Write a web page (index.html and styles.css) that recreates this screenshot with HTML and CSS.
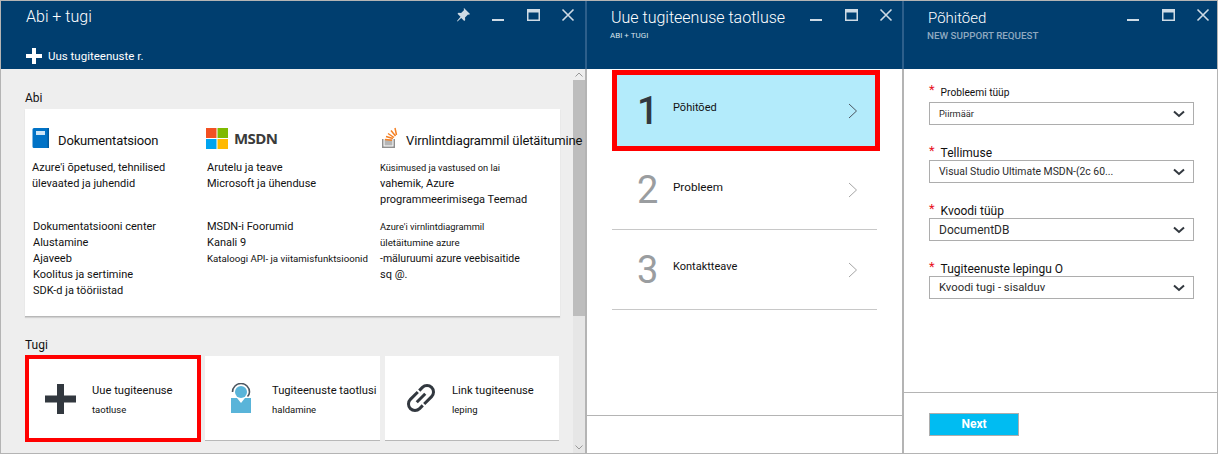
FILE: index.html
```html
<!DOCTYPE html>
<html lang="et">
<head>
    <meta charset="UTF-8">
    <meta name="viewport" content="width=device-width, initial-scale=1.0">
    <title>Abi + tugi</title>
    <link rel="stylesheet" href="styles.css">
</head>
<body>
    <div class="blades">
        <section class="blade blade-help">
            <header class="head">
                <div class="head-top">
                    <h1 class="title">Abi + tugi</h1>
                    <div class="win">
                        <svg width="16" height="16" viewBox="0 0 16 16"><path d="M9 1l6 6-1 .8-1-.4-3 3 .2 2.600-1 1-3-3L2.500 14.500 2 14l3.500-4.300-3-3 1-1 2.600.2 3-3-.4-1z" fill="#cfdbe5"/></svg>
                        <svg width="16" height="16" viewBox="0 0 16 16"><rect x="2" y="12" width="12" height="2" fill="#cfdbe5"/></svg>
                        <svg width="16" height="16" viewBox="0 0 16 16"><path d="M2 2h13v12H2zM3.500 5.500v7h10v-7z" fill="#cfdbe5" fill-rule="evenodd"/></svg>
                        <svg width="16" height="16" viewBox="0 0 16 16"><path d="M2.500 2.500l11 11M13.500 2.500l-11 11" stroke="#cfdbe5" stroke-width="1.600"/></svg>
                    </div>
                </div>
                <div class="command">
                    <svg width="16" height="16" viewBox="0 0 16 16"><path d="M6 0h4v6h6v4h-6v6H6v-6H0V6h6z" fill="#fff"/></svg>
                    <span>Uus tugiteenuste r.</span>
                </div>
            </header>
            <div class="help-body">
                <div class="help-main">
                    <div class="section-label label-abi">Abi</div>
                    <div class="card">
                        <div class="card-col col-docs">
                            <div class="card-head">
                                <svg width="18" height="22" viewBox="0 0 18 22"><path d="M2 1h15v20H2a1.500 1.500 0 0 1-1.500-1.500v-17A1.500 1.500 0 0 1 2 1z" fill="#0072c6"/><rect x="4" y="4" width="9" height="4" fill="#cfe6f7"/><rect x="15.500" y="1" width="1.500" height="20" fill="#005a9e"/></svg>
                                <span class="card-title">Dokumentatsioon</span>
                            </div>
                            <p class="desc">Azure'i õpetused, tehnilised<br>ülevaated ja juhendid</p>
                            <p class="links">Dokumentatsiooni center<br>Alustamine<br>Ajaveeb<br>Koolitus ja sertimine<br>SDK-d ja tööriistad</p>
                        </div>
                        <div class="card-col col-msdn">
                            <div class="card-head">
                                <svg width="22" height="21" viewBox="0 0 22 21"><rect width="10.500" height="10" fill="#f25022"/><rect x="11.500" width="10.500" height="10" fill="#7fba00"/><rect y="11" width="10.500" height="10" fill="#00a4ef"/><rect x="11.500" y="11" width="10.500" height="10" fill="#ffb900"/></svg>
                                <span class="msdn">MSDN</span>
                            </div>
                            <p class="desc">Arutelu ja teave<br>Microsoft ja ühenduse</p>
                            <p class="links">MSDN-i Foorumid<br>Kanali 9<br><span class="tight">Kataloogi API- ja viitamisfunktsioonid</span></p>
                        </div>
                        <div class="card-col col-stack">
                            <div class="card-head">
                                <svg width="18" height="22" viewBox="0 0 18 22"><path d="M2 12v9h13v-9h-1.500v7.500h-10V12z" fill="#8f8f8f"/><rect x="4.500" y="12.500" width="8" height="6" fill="#b5b5b5"/><path d="M5 12.500l7 .8M6 9.500l7 2M8 6.500l6 4M11 3.500l4.500 5.500M15 1l1.500 7" stroke="#f48024" stroke-width="1.500" fill="none"/></svg>
                                <span class="card-title">Virnlintdiagrammil ületäitumine</span>
                            </div>
                            <p class="desc"><span class="small">Küsimused ja vastused on lai</span><br>vahemik, Azure<br>programmeerimisega Teemad</p>
                            <p class="links"><span class="small">Azure'i virnlintdiagrammil</span><br><span class="tight">ületäitumine azure</span><br><span class="mid">-mäluruumi azure veebisaitide</span><br>sq @.</p>
                        </div>
                    </div>
                    <div class="section-label label-tugi">Tugi</div>
                    <div class="tiles">
                        <div class="tile tile-active">
                            <svg width="32" height="32" viewBox="0 0 32 32"><path d="M12 1h7v11.500h12v7H19V31h-7V19.500H0v-7h12z" fill="#32383f"/></svg>
                            <div class="tile-text"><span>Uue tugiteenuse</span><small>taotluse</small></div>
                        </div>
                        <div class="tile">
                            <svg width="20" height="30" viewBox="0 0 20 30"><path d="M1.500 9a8.500 8.500 0 0 1 17 0c0 2-1 3.500-2 4.500" fill="none" stroke="#4d5660" stroke-width="1.600"/><circle cx="10" cy="9" r="6" fill="#59b4d9"/><path d="M0 15h6l4 5 4-5h6v15H0z" fill="#59b4d9"/></svg>
                            <div class="tile-text"><span>Tugiteenuste taotlusi</span><small>haldamine</small></div>
                        </div>
                        <div class="tile">
                            <svg width="32" height="32" viewBox="0 0 32 32"><g transform="rotate(-45 16 16)" fill="none" stroke="#32383f" stroke-width="3"><path d="M18 9.500H7.500a6.500 6.500 0 0 0 0 13H12"/><path d="M14 22.500h10.500a6.500 6.500 0 0 0 0-13H20"/><path d="M10 16h12"/></g></svg>
                            <div class="tile-text"><span>Link tugiteenuse</span><small class="tiny">leping</small></div>
                        </div>
                    </div>
                </div>
                <div class="scrollbar">
                    <div class="scroll-up">
                        <svg width="8" height="5" viewBox="0 0 8 5"><path d="M.5 4.500L4 1l3.500 3.500" fill="none" stroke="#999"/></svg>
                    </div>
                    <div class="scroll-thumb"></div>
                    <div class="scroll-track"></div>
                    <svg class="scroll-down" width="8" height="5" viewBox="0 0 8 5"><path d="M.5.5L4 4 7.500.5" fill="none" stroke="#999"/></svg>
                </div>
            </div>
        </section>

        <section class="blade blade-steps">
            <header class="head">
                <div class="head-top">
                    <div class="title-block">
                        <h1 class="title">Uue tugiteenuse taotluse</h1>
                        <div class="subtitle sub-white">ABI + TUGI</div>
                    </div>
                    <div class="win">
                        <svg width="16" height="16" viewBox="0 0 16 16"><rect x="2" y="12" width="12" height="2" fill="#cfdbe5"/></svg>
                        <svg width="16" height="16" viewBox="0 0 16 16"><path d="M2 2h13v12H2zM3.500 5.500v7h10v-7z" fill="#cfdbe5" fill-rule="evenodd"/></svg>
                        <svg width="16" height="16" viewBox="0 0 16 16"><path d="M2.500 2.500l11 11M13.500 2.500l-11 11" stroke="#cfdbe5" stroke-width="1.600"/></svg>
                    </div>
                </div>
            </header>
            <div class="steps">
                <div class="step step-active">
                    <span class="step-num">1</span>
                    <span class="step-name">Põhitõed</span>
                    <svg width="10" height="16" viewBox="0 0 10 16"><path d="M1 1l7.500 7L1 15" fill="none" stroke="#4b5560" stroke-width="1"/></svg>
                </div>
                <div class="step step-line">
                    <span class="step-num">2</span>
                    <span class="step-name name-wide">Probleem</span>
                    <svg width="10" height="16" viewBox="0 0 10 16"><path d="M1 1l7.500 7L1 15" fill="none" stroke="#a6a6a6" stroke-width="1"/></svg>
                </div>
                <div class="step step-line">
                    <span class="step-num">3</span>
                    <span class="step-name">Kontaktteave</span>
                    <svg width="10" height="16" viewBox="0 0 10 16"><path d="M1 1l7.500 7L1 15" fill="none" stroke="#a6a6a6" stroke-width="1"/></svg>
                </div>
            </div>
            <div class="steps-foot"></div>
        </section>

        <section class="blade blade-form">
            <header class="head">
                <div class="head-top">
                    <div class="title-block">
                        <h1 class="title">Põhitõed</h1>
                        <div class="subtitle">NEW SUPPORT REQUEST</div>
                    </div>
                    <div class="win">
                        <svg width="16" height="16" viewBox="0 0 16 16"><rect x="2" y="12" width="12" height="2" fill="#cfdbe5"/></svg>
                        <svg width="16" height="16" viewBox="0 0 16 16"><path d="M2 2h13v12H2zM3.500 5.500v7h10v-7z" fill="#cfdbe5" fill-rule="evenodd"/></svg>
                        <svg width="16" height="16" viewBox="0 0 16 16"><path d="M2.500 2.500l11 11M13.500 2.500l-11 11" stroke="#cfdbe5" stroke-width="1.600"/></svg>
                    </div>
                </div>
            </header>
            <div class="form">
                <div class="field">
                    <div class="field-label label-small"><span class="req">*</span>Probleemi tüüp</div>
                    <div class="select select-small"><span>Piirmäär</span><svg width="12" height="8" viewBox="0 0 12 8"><path d="M1 1.500l5 4.500 5-4.500" fill="none" stroke="#32383f" stroke-width="2"/></svg></div>
                </div>
                <div class="field">
                    <div class="field-label"><span class="req">*</span>Tellimuse</div>
                    <div class="select select-mid"><span>Visual Studio Ultimate MSDN-(2c 60...</span><svg width="12" height="8" viewBox="0 0 12 8"><path d="M1 1.500l5 4.500 5-4.500" fill="none" stroke="#32383f" stroke-width="2"/></svg></div>
                </div>
                <div class="field">
                    <div class="field-label"><span class="req">*</span>Kvoodi tüüp</div>
                    <div class="select"><span>DocumentDB</span><svg width="12" height="8" viewBox="0 0 12 8"><path d="M1 1.500l5 4.500 5-4.500" fill="none" stroke="#32383f" stroke-width="2"/></svg></div>
                </div>
                <div class="field">
                    <div class="field-label"><span class="req">*</span>Tugiteenuste lepingu O</div>
                    <div class="select select-big"><span>Kvoodi tugi - sisalduv</span><svg width="12" height="8" viewBox="0 0 12 8"><path d="M1 1.500l5 4.500 5-4.500" fill="none" stroke="#32383f" stroke-width="2"/></svg></div>
                </div>
            </div>
            <div class="form-foot">
                <div class="next">Next</div>
            </div>
        </section>
    </div>
</body>
</html>
```

FILE: styles.css
```css
* {
    box-sizing: border-box;
}
html, body {
    margin: 0;
    padding: 0;
    height: 100%;
    overflow: hidden;
}
body {
    background: #fff;
    font-family: Roboto, "Open Sans", sans-serif;
    color: #111;
    font-size: 11px;
}
.blades {
    display: grid;
    grid-template-columns: 585px 317px 316px;
    height: 454px;
    border-top: 1px solid #b4b4b4;
    border-bottom: 1px solid #b4b4b4;
}
.blade {
    display: flex;
    flex-direction: column;
    border-left: 1px solid #b4b4b4;
    min-width: 0;
}
.blade-steps, .blade-form {
    border-left: 2px solid #b4b4b4;
}
.blade-form {
    border-right: 1px solid #b4b4b4;
}
.head {
    height: 68px;
    flex: none;
    background: #003e6f;
    color: #fff;
}
.blade-steps .head, .blade-form .head {
    margin-left: -2px;
    border-left: 2px solid #2d5f8b;
}
.head-top {
    display: flex;
    justify-content: space-between;
    align-items: flex-start;
}
.title {
    margin: 0;
    font-size: 16px;
    font-weight: 300;
    line-height: 22px;
}
.blade-help .title {
    padding: 5px 0 0 25px;
}
.blade-form .title {
    font-size: 15px;
}
.title-block {
    padding: 6px 0 0 24px;
}
.subtitle {
    font-size: 9.800px;
    font-weight: 500;
    line-height: 12px;
    margin-top: 1px;
    margin-left: -1px;
    color: #8fa9c0;
}
.sub-white {
    color: #d8e3ec;
    font-size: 8px;
    font-weight: 400;
}
.win {
    display: flex;
    gap: 19px;
    padding: 6px 9px 0 0;
}
.blade-steps .win {
    padding-right: 8px;
}
.blade-form .win {
    padding-right: 6px;
}
.command {
    display: flex;
    align-items: center;
    gap: 6px;
    margin-top: 20px;
    padding-left: 25px;
    font-size: 11.500px;
}
.help-body {
    flex: 1;
    display: flex;
    background: #eeeeee;
    min-height: 0;
}
.help-main {
    flex: 1;
    min-width: 0;
    padding: 0 13px 0 24px;
    position: relative;
    z-index: 1;
}
.section-label {
    line-height: 16px;
    font-size: 12px;
}
.label-abi {
    padding-top: 21px;
    margin-bottom: 3px;
}
.label-tugi {
    margin-top: 20px;
    margin-bottom: 3px;
}
.card {
    display: grid;
    grid-template-columns: 175px 173px 1fr;
    height: 208px;
    padding: 17px 0 0 7px;
    background: #fff;
    border-bottom: 1px solid #b8b8b8;
    box-shadow: 0 1px 1px rgba(0, 0, 0, .12);
}
.card-col {
    min-width: 0;
}
.card-head {
    display: flex;
    align-items: center;
    gap: 8px;
    height: 24px;
    white-space: nowrap;
}
.card-head svg {
    flex: none;
}
.card-title {
    font-size: 13px;
    font-weight: 400;
    letter-spacing: -.15px;
    padding-top: 5px;
}
.msdn {
    font-family: "Open Sans", sans-serif;
    font-size: 15px;
    font-weight: 700;
    color: #3b3b3b;
    letter-spacing: -.6px;
}
.col-msdn .card-head {
    gap: 6px;
    margin-left: -1px;
}
.desc, .links {
    margin: 0;
    line-height: 16px;
    white-space: nowrap;
}
.desc {
    margin-top: 10px;
    height: 48px;
}
.links {
    margin-top: 11px;
}
.col-docs .links {
    margin-left: 1px;
}
.small {
    font-size: 9.300px;
}
.tight {
    font-size: 9.700px;
}
.mid {
    font-size: 10.500px;
}
.tiles {
    display: grid;
    grid-template-columns: 176px 175px 175px;
    gap: 4px;
    height: 85px;
}
.tile {
    display: flex;
    align-items: center;
    background: #fff;
    border-bottom: 1px solid #b8b8b8;
    padding-left: 20px;
    gap: 15px;
}
.tile:nth-child(2) {
    padding-left: 26px;
    gap: 21px;
}
.tile:nth-child(3) {
    margin-left: 1px;
    padding-left: 20px;
    gap: 15px;
}
.tile-active {
    margin: -1px 0;
    border: 4px solid #ff0000;
    padding-left: 16px;
    gap: 15px;
}
.tile-text {
    display: flex;
    flex-direction: column;
    gap: 7px;
    padding-top: 2px;
    font-size: 11.200px;
    white-space: nowrap;
}
.tile-text small {
    font-size: 9.500px;
}
.scrollbar {
    width: 12px;
    flex: none;
    display: flex;
    flex-direction: column;
    align-items: center;
    background: #e6e6e6;
}
.scroll-up {
    height: 11px;
    width: 100%;
    display: flex;
    align-items: center;
    justify-content: center;
    background: #eeeeee;
}
.scroll-thumb {
    width: 100%;
    height: 236px;
    background: #bdbdbd;
}
.scroll-track {
    flex: 1;
}
.scroll-down {
    margin-bottom: 3px;
}
.steps {
    flex: 1;
    padding-left: 25px;
    padding-right: 25px;
}
.step {
    display: grid;
    align-items: center;
    height: 80px;
}
.step-active {
    height: 81px;
    border: 5px solid #ff0000;
    background: #b3ebfb;
    margin-top: 1px;
    margin-bottom: -1px;
    margin-right: -3px;
    padding: 0 17px 0 20px;
    grid-template-columns: 36px 1fr 10px;
}
.step-active .step-num {
    color: #32383f;
    font-weight: 500;
}
.step-line {
    border-bottom: 1px solid #c8c8c8;
    padding: 0 19px 0 25px;
    grid-template-columns: 36px 1fr 10px;
}
.step-num {
    font-size: 38px;
    font-weight: 400;
    color: #9a9da0;
    line-height: 40px;
}
.step-name {
    font-size: 11px;
    margin-top: -6px;
}
.name-wide {
    font-size: 11.700px;
}
.steps-foot {
    height: 38px;
    flex: none;
    border-top: 1px solid #b4b4b4;
}
.form {
    flex: 1;
    padding: 14px 23px 0 25px;
}
.field {
    height: 58px;
}
.field-label {
    font-size: 12px;
    line-height: 18px;
    height: 19px;
    padding-top: 3px;
    white-space: nowrap;
}
.label-small {
    font-size: 10.200px;
    padding-top: 0;
}
.req {
    color: #e81123;
    margin-right: 6px;
    font-size: 13px;
    vertical-align: 2px;
    line-height: 1;
}
.select {
    display: flex;
    justify-content: space-between;
    align-items: center;
    height: 23px;
    padding: 0 8px 0 9px;
    border: 1px solid #adadad;
    font-size: 12px;
    color: #2b2b2b;
    white-space: nowrap;
}
.select-small {
    font-size: 9.300px;
}
.select-mid {
    font-size: 10.400px;
}
.select-big {
    font-size: 11.300px;
}
.form-foot {
    height: 61px;
    flex: none;
    border-top: 1px solid #b4b4b4;
    padding: 20px 0 0 25px;
}
.next {
    width: 90px;
    height: 23px;
    background: #00bcf2;
    border: 1px solid #adadad;
    color: #fff;
    font-size: 12px;
    font-weight: 700;
    text-align: center;
    line-height: 21px;
}
```
